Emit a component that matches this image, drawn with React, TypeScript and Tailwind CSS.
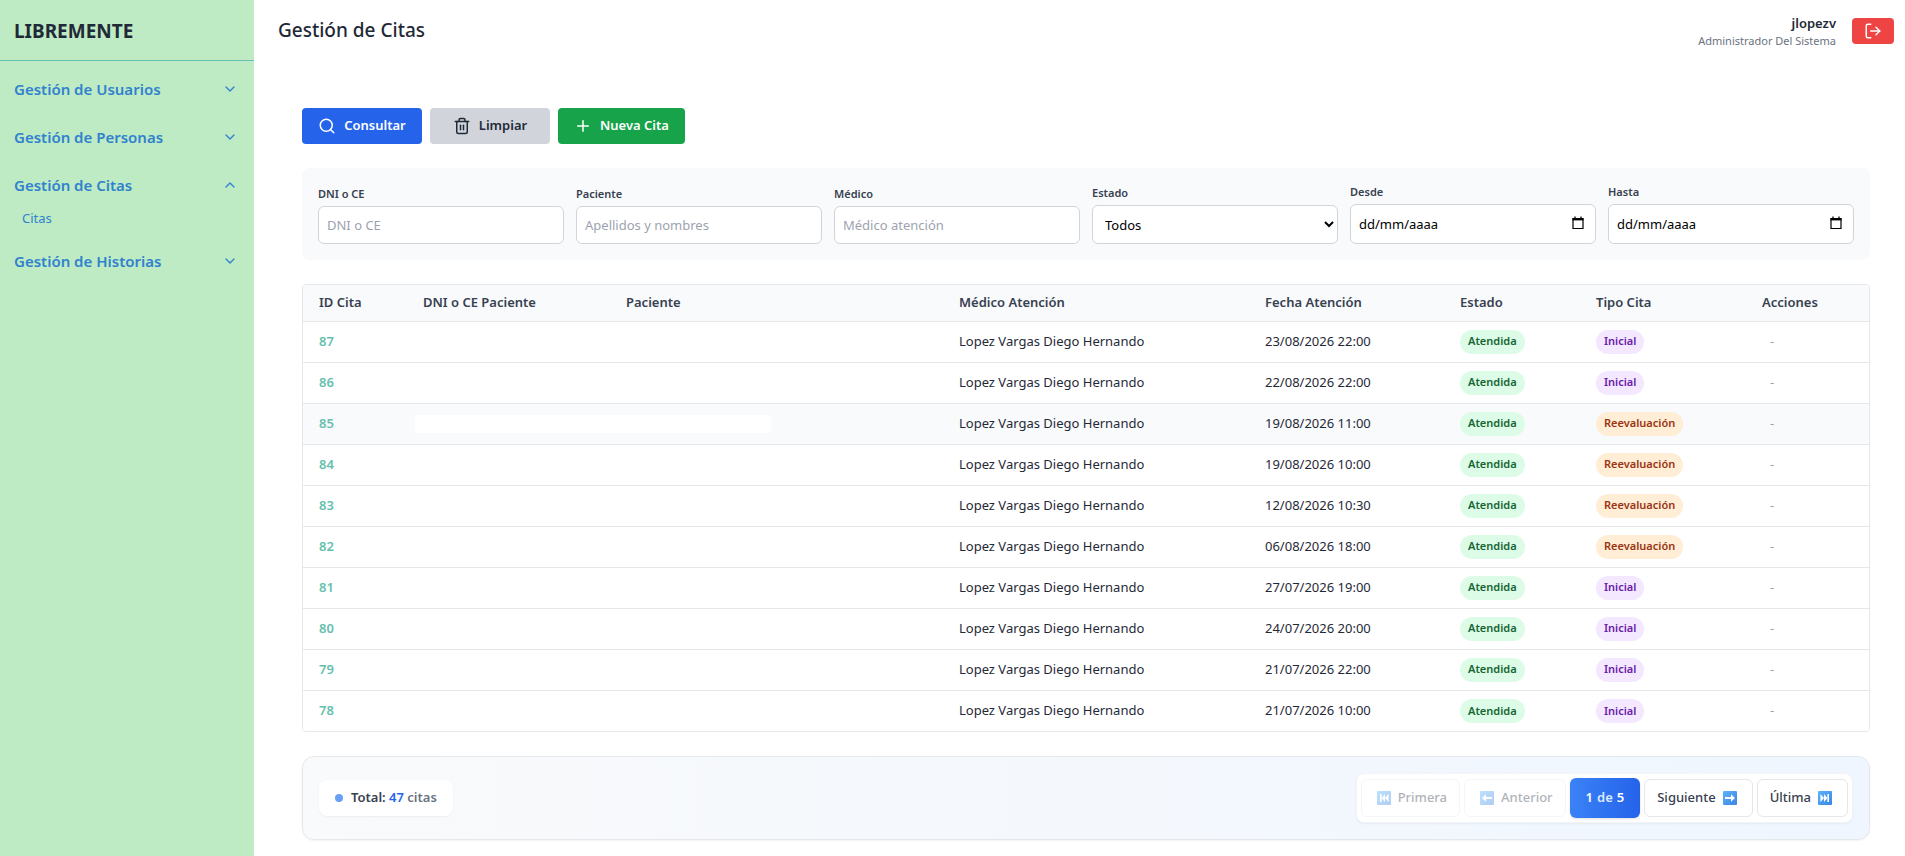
import { useState } from "react";
import { ChevronDown, ChevronUp, LogOut, Plus, Search, Trash2 } from "lucide-react";

interface Cita {
  id: number;
  medico: string;
  fecha: string;
  estado: string;
  tipo: string;
}

const MEDICO = "Lopez Vargas Diego Hernando";

const citas: Cita[] = [
  { id: 87, medico: MEDICO, fecha: "23/08/2026 22:00", estado: "Atendida", tipo: "Inicial" },
  { id: 86, medico: MEDICO, fecha: "22/08/2026 22:00", estado: "Atendida", tipo: "Inicial" },
  { id: 85, medico: MEDICO, fecha: "19/08/2026 11:00", estado: "Atendida", tipo: "Reevaluación" },
  { id: 84, medico: MEDICO, fecha: "19/08/2026 10:00", estado: "Atendida", tipo: "Reevaluación" },
  { id: 83, medico: MEDICO, fecha: "12/08/2026 10:30", estado: "Atendida", tipo: "Reevaluación" },
  { id: 82, medico: MEDICO, fecha: "06/08/2026 18:00", estado: "Atendida", tipo: "Reevaluación" },
  { id: 81, medico: MEDICO, fecha: "27/07/2026 19:00", estado: "Atendida", tipo: "Inicial" },
  { id: 80, medico: MEDICO, fecha: "24/07/2026 20:00", estado: "Atendida", tipo: "Inicial" },
  { id: 79, medico: MEDICO, fecha: "21/07/2026 22:00", estado: "Atendida", tipo: "Inicial" },
  { id: 78, medico: MEDICO, fecha: "21/07/2026 10:00", estado: "Atendida", tipo: "Inicial" },
];

const columnas = [
  { titulo: "ID Cita", ancho: "w-[104px]" },
  { titulo: "DNI o CE Paciente", ancho: "w-[203px]" },
  { titulo: "Paciente", ancho: "w-[333px]" },
  { titulo: "Médico Atención", ancho: "w-[306px]" },
  { titulo: "Fecha Atención", ancho: "w-[195px]" },
  { titulo: "Estado", ancho: "w-[136px]" },
  { titulo: "Tipo Cita", ancho: "w-[166px]" },
  { titulo: "Acciones", ancho: "w-[123px]" },
];

const menu = [
  { titulo: "Gestión de Usuarios", items: ["Usuarios"] },
  { titulo: "Gestión de Personas", items: ["Personas"] },
  { titulo: "Gestión de Citas", items: ["Citas"] },
  { titulo: "Gestión de Historias", items: ["Historias"] },
];

const Sidebar = () => {
  const [abierto, setAbierto] = useState("Gestión de Citas");

  return (
    <aside className="w-[254px] shrink-0 bg-[#beebc3]">
      <div className="flex h-[61px] items-center border-b border-[#66c2b0] px-3.5 pt-0.5">
        <span className="text-[19px] font-bold text-[#1f2937]">LIBREMENTE</span>
      </div>
      <nav className="flex flex-col gap-2 py-2 text-[#3182ce]">
        {menu.map((m) => (
          <div key={m.titulo}>
            <button
              type="button"
              className="flex h-10 w-full items-center justify-between pr-4 pl-3.5 text-[15px] font-semibold"
              onClick={() => setAbierto(abierto === m.titulo ? "" : m.titulo)}
            >
              {m.titulo}
              {abierto === m.titulo ? <ChevronUp size={16} /> : <ChevronDown size={16} />}
            </button>
            {abierto === m.titulo &&
              m.items.map((item) => (
                <a key={item} href="#" className="flex h-7 items-center pl-[22px] text-[13px]">
                  {item}
                </a>
              ))}
          </div>
        ))}
      </nav>
    </aside>
  );
};

const Header = () => (
  <header className="flex h-[61px] items-center justify-between pr-[11px] pl-6">
    <h1 className="text-[19px] font-medium text-[#1f2937]">Gestión de Citas</h1>
    <div className="flex items-center gap-4">
      <div className="text-right">
        <p className="text-[13px] leading-5 font-semibold text-[#1f2937]">jlopezv</p>
        <p className="text-[11px] leading-4 text-[#6b7280]">Administrador Del Sistema</p>
      </div>
      <button
        type="button"
        aria-label="Cerrar sesión"
        className="flex h-[26px] w-[42px] items-center justify-center rounded bg-[#ef4444] text-white"
      >
        <LogOut size={18} />
      </button>
    </div>
  </header>
);

const labelClass = "mb-1 block text-[11px] leading-4 font-semibold text-[#374151]";
const inputClass = "w-full rounded-md border border-[#d1d5db] bg-white px-2 text-[13px]";

const CampoTexto = ({ id, label, placeholder }: { id: string; label: string; placeholder: string }) => (
  <div>
    <label htmlFor={id} className={labelClass}>{label}</label>
    <input id={id} type="text" placeholder={placeholder} className={`${inputClass} h-[38px] placeholder:text-[#9ca3af]`} />
  </div>
);

const CampoFecha = ({ id, label }: { id: string; label: string }) => (
  <div>
    <label htmlFor={id} className={labelClass}>{label}</label>
    <div className="relative">
      <input id={id} type="text" placeholder="dd/mm/aaaa" className={`${inputClass} h-10 placeholder:text-black`} />
      <svg viewBox="0 0 12 14" className="absolute top-3 right-3 h-3.5 w-3" fill="none" stroke="black">
        <path d="M1 2.5h10v10H1z" strokeWidth="1.2" />
        <path d="M.5 3.3h11" strokeWidth="2.2" />
        <path d="M3 .5v2M9 .5v2" strokeWidth="1.3" />
      </svg>
    </div>
  </div>
);

const Filtros = () => (
  <div className="mt-6 grid grid-cols-6 items-end gap-3 rounded-lg bg-[#f9fafb] p-4">
    <CampoTexto id="dni" label="DNI o CE" placeholder="DNI o CE" />
    <CampoTexto id="paciente" label="Paciente" placeholder="Apellidos y nombres" />
    <CampoTexto id="medico" label="Médico" placeholder="Médico atención" />
    <div>
      <label htmlFor="estado" className={labelClass}>Estado</label>
      <select id="estado" className={`${inputClass} h-[39px] text-black`}>
        <option>Todos</option>
        <option>Atendida</option>
      </select>
    </div>
    <CampoFecha id="desde" label="Desde" />
    <CampoFecha id="hasta" label="Hasta" />
  </div>
);

const Fila = ({ cita }: { cita: Cita }) => {
  const resaltada = cita.id === 85;

  return (
    <tr className={`h-[41px] border-b border-[#e5e7eb] last:border-b-0 ${resaltada ? "bg-[#f9fafb]" : "bg-white"}`}>
      <td className="px-4 font-semibold text-[#66bfae]">{cita.id}</td>
      <td colSpan={2} className="px-2">
        {resaltada && <div className="h-[18px] w-[356px] bg-white" />}
      </td>
      <td className="px-4">{cita.medico}</td>
      <td className="px-4">{cita.fecha}</td>
      <td className="px-4">
        <span className="inline-flex h-6 items-center rounded-full bg-[#dcfce7] px-2 text-[11px] font-semibold text-[#166534]">
          {cita.estado}
        </span>
      </td>
      <td className="px-4">
        <span
          className={`inline-flex h-6 items-center rounded-full px-2 text-[11px] font-semibold ${
            cita.tipo === "Inicial" ? "bg-[#f3e8ff] text-[#6b21a8]" : "bg-[#ffedd5] text-[#9a3412]"
          }`}
        >
          {cita.tipo}
        </span>
      </td>
      <td className="px-6 text-[#9ca3af]">-</td>
    </tr>
  );
};

const Tabla = () => (
  <div className="mt-6 overflow-hidden rounded border border-[#e5e7eb]">
    <table className="w-full table-fixed border-collapse text-left text-[13px] text-[#1f2937]">
      <thead>
        <tr className="h-9 border-b border-[#e5e7eb] bg-[#f9fafb] text-[#374151]">
          {columnas.map((c) => (
            <th key={c.titulo} className={`${c.ancho} px-4 font-semibold`}>{c.titulo}</th>
          ))}
        </tr>
      </thead>
      <tbody>
        {citas.map((cita) => (
          <Fila key={cita.id} cita={cita} />
        ))}
      </tbody>
    </table>
  </div>
);

const iconos = {
  primera: "M4 4h1.6v8H4zM9 4v8L5.6 8zM12.6 4v8L9 8z",
  anterior: "M3 8l4-3.8v2.7h6v2.2H7v2.7z",
  siguiente: "M13 8l-4-3.8v2.7H3v2.2h6v2.7z",
  ultima: "M3.4 4v8L7 8zM7 4v8l3.4-4zM10.4 4H12v8h-1.6z",
};

const IconoPagina = ({ nombre }: { nombre: keyof typeof iconos }) => (
  <svg viewBox="-2 -2 20 20" className="size-5">
    <defs>
      <linearGradient id={`fondo-${nombre}`} x1="0" y1="0" x2="1" y2="1">
        <stop offset="0" stopColor="#5cb3fa" />
        <stop offset="1" stopColor="#3a84e4" />
      </linearGradient>
    </defs>
    <rect x="1" y="1" width="14" height="14" rx="1" fill={`url(#fondo-${nombre})`} />
    <path d={iconos[nombre]} fill="white" />
  </svg>
);

const paginaClass =
  "flex h-[38px] items-center gap-1 rounded-md border border-[#e5e7eb] bg-white px-3 font-medium text-[#374151] disabled:opacity-40";

const Paginacion = () => (
  <div className="mt-6 flex items-center justify-between rounded-xl border border-[#e5e7eb] bg-linear-to-r from-[#f9fafb] to-[#eff6ff] p-4 text-[13px] shadow-xs">
    <div className="flex h-9 items-center gap-2 rounded-lg bg-white px-4 font-semibold text-[#374151] shadow-xs">
      <span className="size-2 rounded-full bg-[#6a9ff6]" />
      <span>
        Total: <span className="text-[#2563eb]">47</span> <span className="text-[#6b7280]">citas</span>
      </span>
    </div>
    <div className="flex items-center gap-1 rounded-lg border border-[#f3f4f6] bg-white p-1 shadow-xs">
      <button type="button" className={paginaClass} disabled>
        <IconoPagina nombre="primera" /> Primera
      </button>
      <button type="button" className={paginaClass} disabled>
        <IconoPagina nombre="anterior" /> Anterior
      </button>
      <div className="flex h-10 items-center gap-1 rounded-md bg-linear-to-r from-[#3b82f6] to-[#2563eb] px-4 font-semibold text-white shadow-sm">
        1 <span className="text-[#dbeafe]">de</span> 5
      </div>
      <button type="button" className={paginaClass}>
        Siguiente <IconoPagina nombre="siguiente" />
      </button>
      <button type="button" className={paginaClass}>
        Última <IconoPagina nombre="ultima" />
      </button>
    </div>
  </div>
);

const botonClass = "flex h-9 min-w-[120px] items-center justify-center gap-2 rounded px-4 text-[13px] font-semibold";

export default function App() {
  return (
    <div className="flex min-h-screen bg-white font-['Noto_Sans','Open_Sans',sans-serif]">
      <Sidebar />
      <div className="min-w-0 flex-1">
        <Header />
        <main className="pt-[47px] pr-[35px] pb-4 pl-12">
          <div className="flex gap-2">
            <button type="button" className={`${botonClass} bg-[#2563eb] text-white`}>
              <Search size={18} /> Consultar
            </button>
            <button type="button" className={`${botonClass} bg-[#d1d5db] text-[#1f2937]`}>
              <Trash2 size={18} /> Limpiar
            </button>
            <button type="button" className={`${botonClass} bg-[#16a34a] text-white`}>
              <Plus size={18} /> Nueva Cita
            </button>
          </div>
          <Filtros />
          <Tabla />
          <Paginacion />
        </main>
      </div>
    </div>
  );
}
